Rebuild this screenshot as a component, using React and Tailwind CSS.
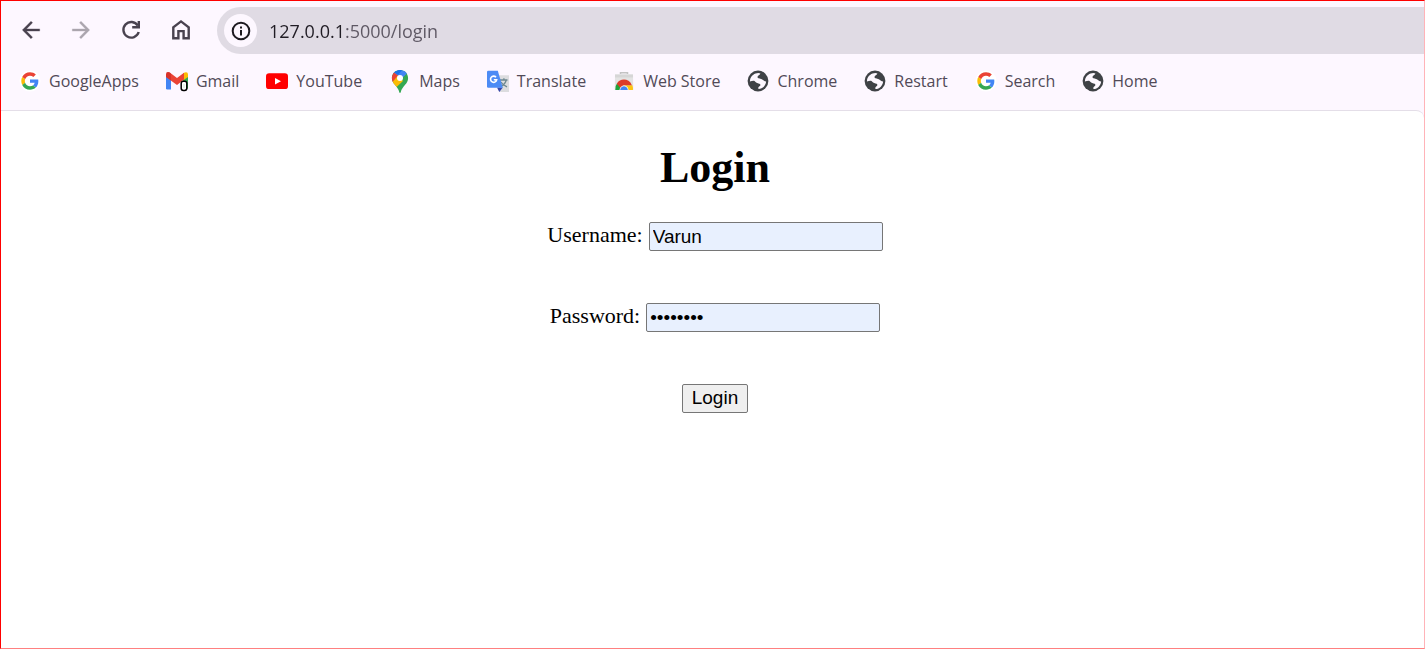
import React from "react";

const toolIcon = "h-[26px] w-[26px]";

function BackIcon() {
  return (
    <svg viewBox="0 0 24 24" className={toolIcon} fill="currentColor" stroke="currentColor" strokeWidth="0.3" aria-hidden="true">
      <path d="M20 11H7.83l5.59-5.59L12 4l-8 8 8 8 1.41-1.41L7.83 13H20z" />
    </svg>
  );
}

function ForwardIcon() {
  return (
    <svg viewBox="0 0 24 24" className={toolIcon} fill="currentColor" stroke="currentColor" strokeWidth="0.3" aria-hidden="true">
      <path d="M12 4l-1.41 1.41L16.17 11H4v2h12.17l-5.58 5.59L12 20l8-8z" />
    </svg>
  );
}

function ReloadIcon() {
  return (
    <svg viewBox="0 0 26 26" className={toolIcon} fill="none" stroke="currentColor" strokeWidth="2.4" aria-hidden="true">
      <path d="M19.8 8.6A7.8 7.8 0 1 0 20.7 15" />
      <path d="M20.8 4v6.3h-6.6" />
    </svg>
  );
}

function HomeIcon() {
  return (
    <svg viewBox="0 0 26 26" className={toolIcon} fill="none" stroke="currentColor" strokeWidth="2.4" aria-hidden="true">
      <path d="M5.3 21.3V10.400L13 4.400l7.700 6v10.900h-5.100v-7.200h-5.200v7.200z" />
    </svg>
  );
}

function InfoIcon() {
  return (
    <svg viewBox="0 0 20 20" className="h-5 w-5" fill="none" stroke="currentColor" strokeWidth="2" aria-hidden="true">
      <circle cx="10" cy="10" r="8.3" />
      <path d="M10 9v5.4M10 5.4v2" />
    </svg>
  );
}

function GoogleIcon() {
  return (
    <svg viewBox="0 0 22 22" className="h-[22px] w-[22px]" aria-hidden="true">
      <circle cx="11" cy="11" r="10.5" fill="#fff" />
      <g transform="translate(2.3 2.3) scale(.3625)">
        <path fill="#EA4335" d="M24 9.5c3.54 0 6.71 1.22 9.21 3.6l6.85-6.85C35.9 2.38 30.47 0 24 0 14.62 0 6.51 5.38 2.56 13.22l7.98 6.19C12.43 13.72 17.74 9.5 24 9.5z" />
        <path fill="#4285F4" d="M46.98 24.55c0-1.57-.15-3.09-.38-4.55H24v9.02h12.94c-.58 2.96-2.26 5.48-4.78 7.18l7.73 6c4.51-4.18 7.09-10.36 7.09-17.65z" />
        <path fill="#FBBC05" d="M10.53 28.59c-.48-1.45-.76-2.99-.76-4.59s.27-3.14.76-4.59l-7.98-6.19C.92 16.46 0 20.12 0 24c0 3.88.92 7.54 2.56 10.78l7.97-6.19z" />
        <path fill="#34A853" d="M24 48c6.48 0 11.93-2.13 15.89-5.81l-7.73-6c-2.15 1.45-4.92 2.3-8.16 2.3-6.26 0-11.57-4.22-13.47-9.91l-7.98 6.19C6.51 42.62 14.62 48 24 48z" />
      </g>
    </svg>
  );
}

function GmailIcon() {
  return (
    <svg viewBox="0 0 22 22" className="h-[22px] w-[22px]" aria-hidden="true">
      <path fill="#4285F4" d="M0 5l5 3.800V19.500H1.200Q0 19.500 0 18.300z" />
      <path fill="#34A853" d="M17 8.800L22 5v12.800q0 1.200-1.200 1.200H17z" />
      <path fill="#FBBC04" d="M17 3.700l1.600-1.200q3.400-1 3.400 2v2.500l-5 3.600z" />
      <path fill="#EA4335" d="M0 4.500Q.2 1.200 3.400 2.300L11 8.100l7-5.300v6.600l-7 5.500L0 7z" />
      <path fill="#C5221F" d="M0 4.500Q.2 1.200 3.400 2.300L5 3.500v7.100L0 7z" opacity=".5" />
      <rect x="15.200" y="11.300" width="5.600" height="9.200" rx="2.200" fill="#fff" stroke="#000" strokeWidth="1.500" />
      <path d="M18 14v4" stroke="#cfead5" strokeWidth="1" />
    </svg>
  );
}

function YouTubeIcon() {
  return (
    <svg viewBox="0 0 22 22" className="h-[22px] w-[22px]" aria-hidden="true">
      <rect y="3.300" width="22" height="15.800" rx="3.200" fill="#f00" />
      <path fill="#fff" d="M9 7.900l6 3.300-6 3.300z" />
    </svg>
  );
}

function MapsIcon() {
  return (
    <svg viewBox="0 0 22 23" className="h-[23px] w-[22px]" aria-hidden="true">
      <clipPath id="maps-pin">
        <path d="M11 0C6.300 0 2.900 3.600 2.900 8c0 3 1.200 4.700 3.200 7.100 2 2.400 3.500 4.300 4.100 6.900.3 1.200 1.300 1.200 1.600 0 .6-2.600 2.100-4.500 4.100-6.900 2-2.400 3.200-4.100 3.200-7.100C19.100 3.600 15.700 0 11 0z" />
      </clipPath>
      <g clipPath="url(#maps-pin)">
        <path fill="#34A853" d="M0 0h22v23H0z" />
        <path fill="#4285F4" d="M4 3L9 0h8l1.500 3L9 12z" />
        <path fill="#1A73E8" d="M5 2l6-3 3 0-5 6z" />
        <path fill="#EA4335" d="M1 8l3.800-5.500 5 3.500L3.900 13z" />
        <path fill="#FBBC04" d="M3.300 12.200L9 5.500l5 5.500-7 6.500z" />
      </g>
      <circle cx="11" cy="8" r="3" fill="#fff" />
    </svg>
  );
}

function TranslateIcon() {
  return (
    <svg viewBox="0 0 22 22" className="h-[22px] w-[22px]" aria-hidden="true">
      <path fill="#dcdcdf" d="M9 5.200h13V22H12z" />
      <path stroke="#6d8790" strokeWidth="1.300" fill="none" d="M13 10h7.500M16.900 8.300V10M19.200 10c-.5 2.500-2.600 5-5 6.300M14 12c1.200 2.400 3.500 3.800 6 4.900" />
      <path fill="#3949ab" d="M10 17.500h5.800L12.300 22z" />
      <path fill="#4c8bf5" d="M1.200.8h9.600L15.800 17.800H1.200Q0 17.800 0 16.600V2Q0 .8 1.200.8z" />
      <path stroke="#fff" strokeWidth="1.600" fill="none" d="M9 7.200a3.100 3.100 0 1 0 .7 2.500H6.800" />
    </svg>
  );
}

function WebStoreIcon() {
  return (
    <svg viewBox="0 0 22 22" className="h-[22px] w-[22px]" aria-hidden="true">
      <path d="M7.500 4V2.700h7V4" fill="none" stroke="#c3c3c3" strokeWidth="1.500" />
      <path d="M2 4.500h18l.3 15.500H1.700z" fill="#e3e3e3" />
      <path d="M2 4.500h18v3H2z" fill="#d6d6d6" />
      <path d="M11 18.500L4 13.500Q1.800 16 2.300 20H11z" fill="#1fa33b" />
      <path d="M11 15.200h8.400q.8 2.400.5 4.800H11z" fill="#fbc514" />
      <path d="M3.800 13.700C7 8 16 8 18.900 15.200H11L7.300 18z" fill="#dd3b2a" />
      <path d="M6.500 20c.5-6 8.500-6 9 0z" fill="#fff" />
      <path d="M7.200 20c.5-5 7.100-5 7.600 0z" fill="#4285f4" />
    </svg>
  );
}

function GlobeIcon() {
  return (
    <svg viewBox="0 0 22 22" className="h-[22px] w-[22px]" aria-hidden="true">
      <circle cx="11" cy="11" r="10.400" fill="#3f4246" />
      <path
        fill="#fdf7ff"
        d="M3.100 9.500C4 5.600 7.500 3 11.400 2.900l2 .5c-.3 1.900-2.900 1.900-2.900 3.600 0 1.600 2.500 1.300 4.300 2.200 1.800.9 2.500 2.300 4.300 2.300-.2 4-3.500 7.400-7.500 7.600-.8-1.200-.1-2.400 1.200-3.200 1.300-.9.500-2.300-1.300-2.500-2-.2-3-1.400-4-2.400-1.300-.5-3 .3-4.600.5z"
      />
    </svg>
  );
}

const bookmarks = [
  { label: "GoogleApps", Icon: GoogleIcon },
  { label: "Gmail", Icon: GmailIcon },
  { label: "YouTube", Icon: YouTubeIcon },
  { label: "Maps", Icon: MapsIcon },
  { label: "Translate", Icon: TranslateIcon },
  { label: "Web Store", Icon: WebStoreIcon },
  { label: "Chrome", Icon: GlobeIcon },
  { label: "Restart", Icon: GlobeIcon },
  { label: "Search", Icon: GoogleIcon },
  { label: "Home", Icon: GlobeIcon },
];

function Toolbar() {
  return (
    <div className="flex items-center pt-1.5">
      <div className="flex gap-6 pr-[23px] pb-px pl-[17px] text-[#49424f]">
        <button type="button" aria-label="Back"><BackIcon /></button>
        <button type="button" aria-label="Forward" className="text-[#aba5ae]"><ForwardIcon /></button>
        <button type="button" aria-label="Reload"><ReloadIcon /></button>
        <button type="button" aria-label="Home"><HomeIcon /></button>
      </div>
      <div className="flex h-[47px] flex-1 items-center gap-3 rounded-l-full bg-[#e0dbe4] pl-[7px]">
        <button type="button" aria-label="Site information" className="flex h-[33px] w-[33px] items-center justify-center rounded-full bg-[#fdf7ff] text-[#1d1a20]">
          <InfoIcon />
        </button>
        <input
          type="text"
          aria-label="Address"
          defaultValue="127.0.0.1:5000/login"
          className="min-w-0 flex-1 bg-[linear-gradient(to_right,#201c24_74px,#5d5763_74px)] bg-clip-text text-lg text-[#201c24] outline-none [-webkit-text-fill-color:transparent]"
        />
      </div>
    </div>
  );
}

function BookmarksBar() {
  return (
    <nav aria-label="Bookmarks" className="flex h-14 items-center gap-[27px] pb-0.5 pl-[18px]">
      {bookmarks.map(({ label, Icon }) => (
        <a key={label} href="#" className="flex items-center gap-2 text-base whitespace-nowrap text-[#514a57]">
          <Icon />
          {label}
        </a>
      ))}
    </nav>
  );
}

function LoginForm() {
  const field = "h-[29px] w-[234px] rounded-xs border border-[#767676] bg-[#e8f0fe] px-[3px] font-['Liberation_Sans',Arial,sans-serif] text-[19px] text-black";
  return (
    <main className="flex flex-1 flex-col items-center rounded-tr-lg border-t border-[#e4dee8] bg-white pt-[33px] pl-[5px] font-['Liberation_Serif','Times_New_Roman',serif] text-[22px] text-black">
      <h1 className="text-[44px] leading-12 font-bold">Login</h1>
      <form className="mt-[30px] flex flex-col items-center gap-[52px]" onSubmit={(e) => e.preventDefault()}>
        <div className="flex h-[29px] items-start gap-1.5">
          <label htmlFor="username" className="leading-[26px]">Username:</label>
          <input id="username" type="text" defaultValue="Varun" className={field} />
        </div>
        <div className="flex h-[29px] items-start gap-1.5">
          <label htmlFor="password" className="leading-[26px]">Password:</label>
          <input id="password" type="password" defaultValue="password" className={field} />
        </div>
        <button type="submit" className="h-[29px] rounded-xs border border-[#767676] bg-[#efefef] px-[9px] pb-0.5 font-['Liberation_Sans',Arial,sans-serif] text-[19px] leading-[25px]">
          Login
        </button>
      </form>
    </main>
  );
}

export default function App() {
  return (
    <div className="flex min-h-screen flex-col border border-t-[#f00] border-r-[#ffb3b8] border-b-[#ff8080] border-l-[#f00] bg-[#fdf7ff]">
      <header className="font-['Open_Sans','Noto_Sans',sans-serif]">
        <Toolbar />
        <BookmarksBar />
      </header>
      <LoginForm />
    </div>
  );
}
